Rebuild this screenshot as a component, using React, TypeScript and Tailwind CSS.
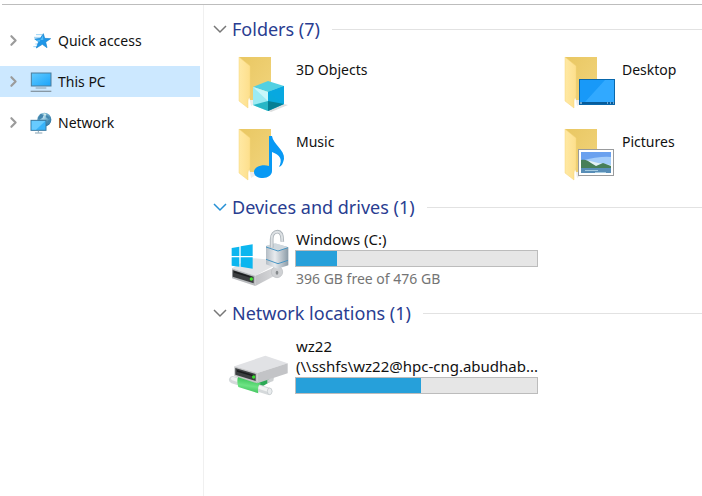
import { useState, type ReactNode } from "react"
import { ChevronRight } from "lucide-react"
import clsx from "clsx"

type FolderKind = "objects" | "desktop" | "music" | "pictures"

const folders: { name: string; kind: FolderKind }[] = [
  { name: "3D Objects", kind: "objects" },
  { name: "Desktop", kind: "desktop" },
  { name: "Music", kind: "music" },
  { name: "Pictures", kind: "pictures" },
]

function StarIcon() {
  return (
    <svg viewBox="0 0 66 66" className="h-[22px] w-[22px]" aria-hidden="true">
      <path d="M18 14h18M12 22h20M16 42h12M10 50h14" stroke="#9bd3f5" strokeWidth="3" />
      <path
        d="m40 11 4 14 18 1-15 10 4 17-14-10-18 11 7-19-12-8 17-2z"
        fill="#1e96e8"
        stroke="#1683cf"
        strokeWidth="2"
      />
      <path d="m39 16 1 14-24-1 12 7z" fill="#55bdf8" />
    </svg>
  )
}

function ComputerIcon() {
  return (
    <svg viewBox="0 0 66 66" className="h-[22px] w-[22px]" aria-hidden="true">
      <defs>
        <linearGradient id="screen" x1="0" y1="0" x2="1" y2="1">
          <stop offset="0" stopColor="#62cbff" />
          <stop offset="1" stopColor="#1ba4fb" />
        </linearGradient>
      </defs>
      <rect x="4" y="6" width="59" height="39" fill="url(#screen)" stroke="#4e7d9b" strokeWidth="3" />
      <path d="M17 51h32" stroke="#8aa0b0" strokeWidth="3" />
      <path d="M2 61h62" stroke="#8798a4" strokeWidth="4" />
    </svg>
  )
}

function NetworkIcon() {
  return (
    <svg viewBox="0 0 66 66" className="h-[22px] w-[22px]" aria-hidden="true">
      <defs>
        <radialGradient id="globe" cx="0.4" cy="0.3" r="0.7">
          <stop offset="0" stopColor="#c5e6f2" />
          <stop offset="0.5" stopColor="#6aaac9" />
          <stop offset="1" stopColor="#246e9f" />
        </radialGradient>
      </defs>
      <circle cx="43" cy="23" r="21" fill="url(#globe)" />
      <path d="m32 5 9 4-3 8-11 7-4-6zM50 8l10 9-5 4-8-6zM52 26l11-3-3 11-8 6z" fill="#4386ae" />
      <path d="m40 4 9 2-4 6z" fill="#d7efe9" />
      <rect x="3" y="25" width="45" height="30" fill="#38b3fa" stroke="#3d7aa0" strokeWidth="3" />
      <path d="M5 27h41L18 53H5z" fill="#67cbff" />
      <path d="M25 56v6M15 63h22" stroke="#87a3b3" strokeWidth="3" />
    </svg>
  )
}

function FolderOverlay({ kind }: { kind: FolderKind }) {
  switch (kind) {
    case "objects":
      return (
        <>
          <path d="m31 55 16-6 5 1-17 7z" fill="#dedede" />
          <path d="m17 32 15-6 16 5-16 6z" fill="#52d0e2" />
          <path d="M17 32 32 37v19l-15-6z" fill="#9cebf3" />
          <path d="M32 37 48 31v18l-16 7z" fill="#08a9dc" />
          <path d="m17 32 15 5v9z" fill="#c8f7fa" />
          <path d="m17 50 15-4v10z" fill="#27b6c6" />
          <path d="m32 46 16 3-16 7z" fill="#047f94" />
          <path d="m32 37 16-6v18z" fill="#08a8e0" />
        </>
      )
    case "desktop":
      return (
        <>
          <rect x="17.5" y="24.5" width="35" height="25" fill="#1899f8" stroke="#0867ac" />
          <path d="M43 25h9v22H23z" fill="#31a9ff" />
          <path d="M17 48h36" stroke="#075b9a" strokeWidth="2" />
          <path d="M18 48h2M45 48h1M48 48h1M51 48h1" stroke="#d9efff" />
        </>
      )
    case "music":
      return (
        <path
          d="M33 9h3c1 8 13 14 12 23-1 4-2 7-5 8 4-8 1-12-7-15v19c0 4-4 7-9 7-5 0-9-2-9-6 0-5 8-8 15-6z"
          fill="#0899f4"
        />
      )
    case "pictures":
      return (
        <>
          <rect x="16.5" y="22.5" width="35" height="26" fill="#fff" stroke="#999b9d" />
          <path d="M19 25h30v21H19z" fill="#a4cdfa" />
          <path d="M19 25h30v5q-12-1-30 4z" fill="#6aa1ef" />
          <path d="m19 33 9 1 8 2 13 2v4H19z" fill="#e4f1f5" />
          <path d="M19 33c5-1 7 1 10 3l5 3 7-3 8 3v3H19z" fill="#477f59" />
          <path d="M19 41h30v5H19z" fill="#588eb7" />
          <path d="M23 43.5h13M33 45.5h11" stroke="#a5cbe0" />
        </>
      )
  }
}

function FolderIcon({ kind }: { kind: FolderKind }) {
  return (
    <svg viewBox="0 0 56 58" className="h-[58px] w-[56px] shrink-0" aria-hidden="true">
      <defs>
        <linearGradient id="folder-back" x1="0" y1="0" x2="1" y2="1">
          <stop offset="0" stopColor="#e9c762" />
          <stop offset="1" stopColor="#f1d47c" />
        </linearGradient>
        <linearGradient id="folder-front" x1="0" y1="0" x2="1" y2="0">
          <stop offset="0" stopColor="#ffe9a4" />
          <stop offset="1" stopColor="#fddf8c" />
        </linearGradient>
      </defs>
      <path d="M13 41h10v5l-8 5z" fill="#ededed" />
      <path d="M3 2h32v43H14z" fill="url(#folder-back)" />
      <path d="M3 2 14 11v29c0 3-2 3-2 6v7L3 46z" fill="url(#folder-front)" stroke="#f4d57b" strokeWidth="0.5" />
      <FolderOverlay kind={kind} />
    </svg>
  )
}

function SystemDriveIcon() {
  return (
    <svg viewBox="0 0 180 174" className="h-[58px] w-[60px] shrink-0 overflow-visible" aria-hidden="true">
      <defs>
        <linearGradient id="lock-body" x1="0" y1="0" x2="1" y2="0">
          <stop offset="0" stopColor="#b4bdc5" />
          <stop offset="0.4" stopColor="#e8ebee" />
          <stop offset="1" stopColor="#8b9ba7" />
        </linearGradient>
        <linearGradient id="drive-side" x1="0" y1="0" x2="1" y2="0">
          <stop offset="0" stopColor="#bfc0c3" />
          <stop offset="1" stopColor="#dfe0e2" />
        </linearGradient>
      </defs>
      <path d="m12 118 54-31 100 8-84 45z" fill="#e3e4e6" />
      <path d="m82 140 78-34v24l-78 41z" fill="url(#drive-side)" />
      <path d="m12 118 70 22v31l-70-23z" fill="#b9bbbe" />
      <path d="m14 123 63 20v20l-63-20z" fill="#3c3e40" />
      <path d="m18 126 55 18v4l-55-17z" fill="#1b1d1e" />
      <circle cx="70" cy="150" r="5" fill="#45e52d" />
      <path d="m11 57 23-4v28H11zM38 52l36-6v35H38zM11 85h23v28l-23-3zM38 85h36v34l-36-6z" fill="#0cb6ef" />
      <circle cx="147" cy="129" r="17" fill="#cfd1d4" stroke="#b9bcbf" strokeWidth="2" />
      <path d="m114 51 27-8 40 12v54l-32 10-35-13z" fill="url(#lock-body)" />
      <path d="m114 51 27-8 40 12-31 10z" fill="#cfd8de" />
      <path
        d="M131 56V30c0-14 8-22 18-22 11 0 14 10 14 30"
        fill="none"
        stroke="#a8b0b6"
        strokeWidth="11"
      />
      <path d="M131 56V30c0-14 8-22 18-22 11 0 14 10 14 30" fill="none" stroke="#dde1e4" strokeWidth="6" />
      <path d="m114 54 36 12 30-10M114 91l36 13 30-10" fill="none" stroke="#4b97c4" strokeWidth="3" />
      <ellipse cx="147" cy="131" rx="4" ry="6" fill="#85898c" />
    </svg>
  )
}

function NetworkDriveIcon() {
  return (
    <svg viewBox="0 0 180 132" className="h-[44px] w-[60px] shrink-0" aria-hidden="true">
      <defs>
        <linearGradient id="pipe" x1="0.2" y1="0" x2="0" y2="1">
          <stop offset="0" stopColor="#30bd50" />
          <stop offset="0.5" stopColor="#6ee384" />
          <stop offset="1" stopColor="#2fb64e" />
        </linearGradient>
      </defs>
      <path d="m78 96 46-18v13l-34 20z" fill="#2ba955" />
      <path d="m118 83 20-7-2 11-18 7z" fill="#cdd0d2" />
      <path d="M14 83 122 118" stroke="#d5d9db" strokeWidth="22" strokeLinecap="round" />
      <path d="M14 80 122 115" stroke="#f0f2f2" strokeWidth="10" strokeLinecap="round" />
      <ellipse cx="125" cy="118" rx="7" ry="10" fill="#e9ecee" stroke="#c0c5c8" strokeWidth="2" />
      <path d="m31 71 68 22q-12 9-8 31L31 105q-6-17 0-34z" fill="url(#pipe)" />
      <path d="m19 43 93-32 67 23-91 29z" fill="#e1e2e5" />
      <path d="m88 63 91-29v30L88 94z" fill="#c3c4c7" />
      <path d="m19 43 69 20v31L19 72z" fill="#c4c5c7" />
      <path d="m22 48 61 18v21L22 68z" fill="#3c3f41" />
      <path d="m27 54 52 16v4L27 59z" fill="#1b1d1e" />
      <circle cx="77" cy="75" r="5" fill="#38df2c" />
    </svg>
  )
}

interface SectionProps {
  title: string
  highlighted?: boolean
  children: ReactNode
}

function Section({ title, highlighted, children }: SectionProps) {
  const [open, setOpen] = useState(true)

  return (
    <section>
      <h2 className="flex h-6 items-center gap-3">
        <button
          type="button"
          aria-expanded={open}
          onClick={() => setOpen(!open)}
          className="flex shrink-0 items-center gap-1 text-lg leading-6 text-[#293d91]"
        >
          <svg
            viewBox="0 0 16 10"
            className={clsx("h-[10px] w-4", highlighted ? "text-[#2590d5]" : "text-[#777777]", !open && "-rotate-90")}
            aria-hidden="true"
          >
            <path d="m2 2 6 6 6-6" fill="none" stroke="currentColor" strokeWidth="1.5" />
          </svg>
          {title}
        </button>
        <span className="h-px flex-1 bg-[#e2e2e2]" />
      </h2>
      {open && children}
    </section>
  )
}

function UsageBar({ label, percent }: { label: string; percent: number }) {
  return (
    <div
      role="progressbar"
      aria-label={label}
      aria-valuenow={percent}
      className="h-[17px] w-full border border-[#bcbcbc] bg-[#e6e6e6]"
    >
      <div className="h-full bg-[#26a0da]" style={{ width: `${percent}%` }} />
    </div>
  )
}

const places = [
  { name: "Quick access", icon: <StarIcon /> },
  { name: "This PC", icon: <ComputerIcon /> },
  { name: "Network", icon: <NetworkIcon /> },
]

export default function App() {
  const [selected, setSelected] = useState("This PC")

  return (
    <div className="min-h-screen bg-white pt-1 font-['Noto_Sans',sans-serif] text-sm text-[#111111]">
      <div className="ml-0.5 h-px bg-[#bdbdbd]" />
      <div className="flex min-h-[calc(100vh-5px)]">
        <nav aria-label="Places" className="w-[204px] shrink-0 border-r border-[#f0f0f0] pt-5 pr-[3px]">
          <ul className="flex flex-col gap-[10px]">
            {places.map((place) => (
              <li key={place.name}>
                <button
                  type="button"
                  aria-current={selected === place.name}
                  onClick={() => setSelected(place.name)}
                  className={clsx(
                    "flex h-[31px] w-full items-center pl-[5px] text-left",
                    selected === place.name && "bg-[#cce8ff]"
                  )}
                >
                  <ChevronRight className="mr-2 h-[17px] w-[17px] text-[#9b9b9b]" strokeWidth={3} />
                  {place.icon}
                  <span className="ml-1.5">{place.name}</span>
                </button>
              </li>
            ))}
          </ul>
        </nav>

        <main className="min-w-0 flex-1 pt-3 pl-2">
          <Section title="Folders (7)">
            <ul className="grid grid-cols-[326px_1fr] pt-2.5 pl-6">
              {folders.map((folder) => (
                <li key={folder.name} className="flex h-[72px] gap-1 pt-1">
                  <FolderIcon kind={folder.kind} />
                  <span className="pt-[5px] leading-5">{folder.name}</span>
                </li>
              ))}
            </ul>
          </Section>

          <Section title="Devices and drives (1)" highlighted>
            <div className="flex gap-[7px] pt-2.5 pb-3 pl-4">
              <SystemDriveIcon />
              <div className="w-[243px]">
                <p className="pl-px text-[15px] leading-[21px]">Windows (C:)</p>
                <UsageBar label="Windows (C:) used space" percent={17} />
                <p className="pt-px pl-px leading-[21px] text-[#747474]">396 GB free of 476 GB</p>
              </div>
            </div>
          </Section>

          <Section title="Network locations (1)">
            <div className="flex gap-[7px] pt-[11px] pl-4">
              <div className="pt-4">
                <NetworkDriveIcon />
              </div>
              <div className="w-[243px]">
                <p className="pl-px text-[15px] leading-5">wz22</p>
                <p className="pl-px text-[15px] leading-[21px] whitespace-nowrap">(\\sshfs\wz22@hpc-cng.abudhab...</p>
                <UsageBar label="wz22 used space" percent={52} />
              </div>
            </div>
          </Section>
        </main>
      </div>
    </div>
  )
}
